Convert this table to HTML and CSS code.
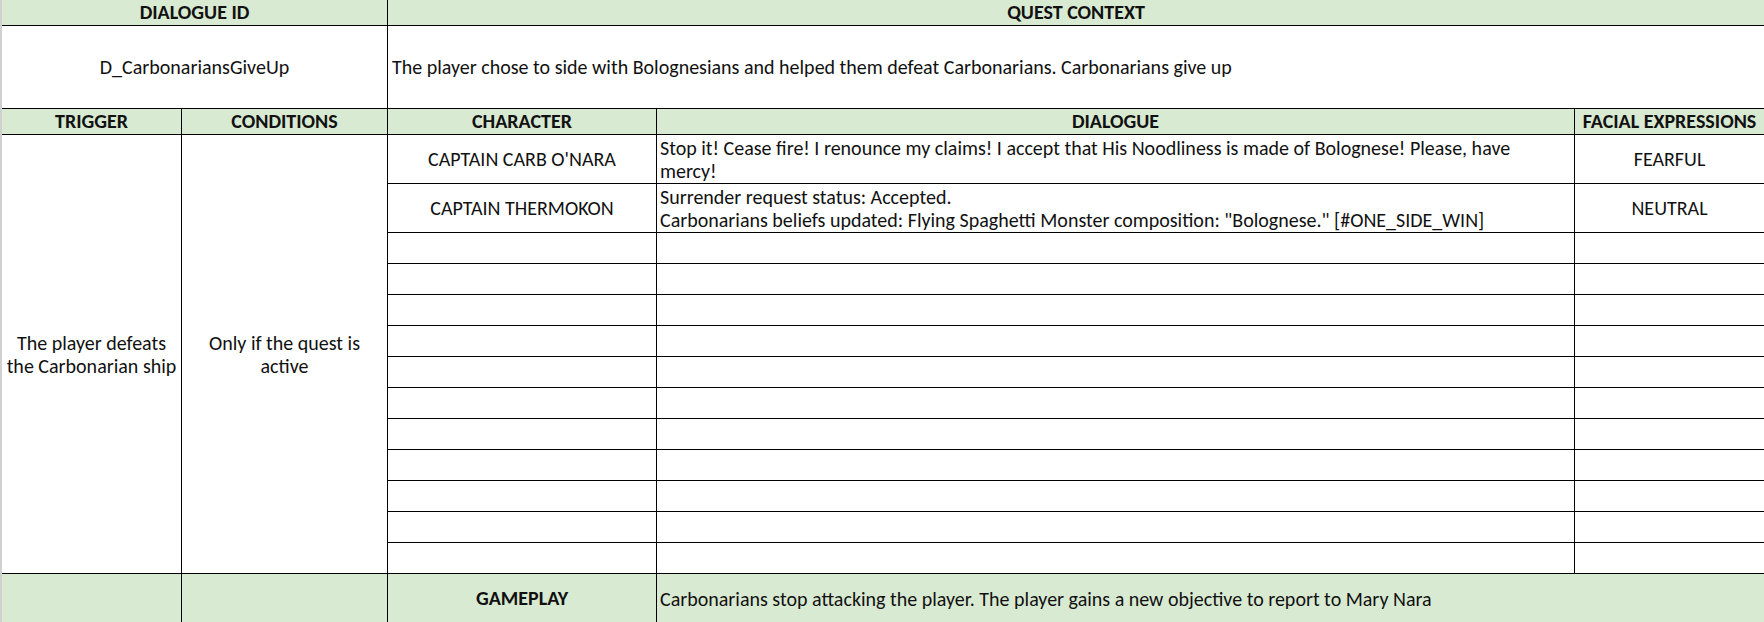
FILE: index.html
```html
<!DOCTYPE html>
<html>
<head>
<meta charset="utf-8">
<link rel="stylesheet" href="styles.css">
</head>
<body>
<div class="sheet">
  <div class="cell hdr span-id">DIALOGUE ID</div>
  <div class="cell hdr span-ctx last">QUEST CONTEXT</div>

  <div class="cell center span-id">D_CarbonariansGiveUp</div>
  <div class="cell left span-ctx last ctx">The player chose to side with Bolognesians and helped them defeat Carbonarians. Carbonarians give up</div>

  <div class="cell hdr">TRIGGER</div>
  <div class="cell hdr">CONDITIONS</div>
  <div class="cell hdr">CHARACTER</div>
  <div class="cell hdr">DIALOGUE</div>
  <div class="cell hdr last">FACIAL EXPRESSIONS</div>

  <div class="cell center tall">The player defeats the Carbonarian ship</div>
  <div class="cell center tall cond">Only if the quest is active</div>

  <div class="cell center">CAPTAIN CARB O'NARA</div>
  <div class="cell left">Stop it! Cease fire! I renounce my claims! I accept that His Noodliness is made of Bolognese! Please, have mercy!</div>
  <div class="cell center last">FEARFUL</div>

  <div class="cell center">CAPTAIN THERMOKON</div>
  <div class="cell left">Surrender request status: Accepted.<br>Carbonarians beliefs updated: Flying Spaghetti Monster composition: "Bolognese." [#ONE_SIDE_WIN]</div>
  <div class="cell center last">NEUTRAL</div>

  <div class="cell"></div><div class="cell"></div><div class="cell last"></div>
  <div class="cell"></div><div class="cell"></div><div class="cell last"></div>
  <div class="cell"></div><div class="cell"></div><div class="cell last"></div>
  <div class="cell"></div><div class="cell"></div><div class="cell last"></div>
  <div class="cell"></div><div class="cell"></div><div class="cell last"></div>
  <div class="cell"></div><div class="cell"></div><div class="cell last"></div>
  <div class="cell"></div><div class="cell"></div><div class="cell last"></div>
  <div class="cell"></div><div class="cell"></div><div class="cell last"></div>
  <div class="cell"></div><div class="cell"></div><div class="cell last"></div>
  <div class="cell"></div><div class="cell"></div><div class="cell last"></div>
  <div class="cell"></div><div class="cell"></div><div class="cell last"></div>

  <div class="cell green foot"></div>
  <div class="cell green foot"></div>
  <div class="cell hdr foot">GAMEPLAY</div>
  <div class="cell green left foot span-2 last">Carbonarians stop attacking the player. The player gains a new objective to report to Mary Nara</div>
</div>
</body>
</html>
```
FILE: styles.css
```css
html, body {
  margin: 0;
  padding: 0;
  background: #ffffff;
}

body {
  font-family: "Carlito", "Calibri", "Lato", sans-serif;
  font-size: 20px;
  color: #111;
  overflow: hidden;
}

.sheet {
  display: grid;
  grid-template-columns: 180px 206px 269px 918px 1fr;
  grid-template-rows: 26px 83px 26px 49px 49px repeat(11, 31px) 49px;
  border-left: 2px solid #d0d0d0;
  width: 1762px;
}

.cell {
  box-sizing: border-box;
  border-right: 1px solid #000;
  border-bottom: 1px solid #000;
  display: flex;
  align-items: center;
  line-height: 23.5px;
  overflow: hidden;
}

.cell.last {
  border-right: none;
}

.hdr {
  background: #d9ead3;
  font-weight: bold;
  justify-content: center;
  text-align: center;
  white-space: nowrap;
}

.green {
  background: #d9ead3;
}

.center {
  justify-content: center;
  text-align: center;
  padding: 2px 3px 0;
}

.left {
  justify-content: flex-start;
  text-align: left;
  padding: 2px 3px 0;
}

.ctx {
  padding-left: 4px;
}

.cond {
  padding: 2px 12px 0;
}

.span-id {
  grid-column: span 2;
}

.span-ctx {
  grid-column: span 3;
}

.span-2 {
  grid-column: span 2;
}

.tall {
  grid-row: span 13;
}

.foot {
  border-bottom: none;
}
```
